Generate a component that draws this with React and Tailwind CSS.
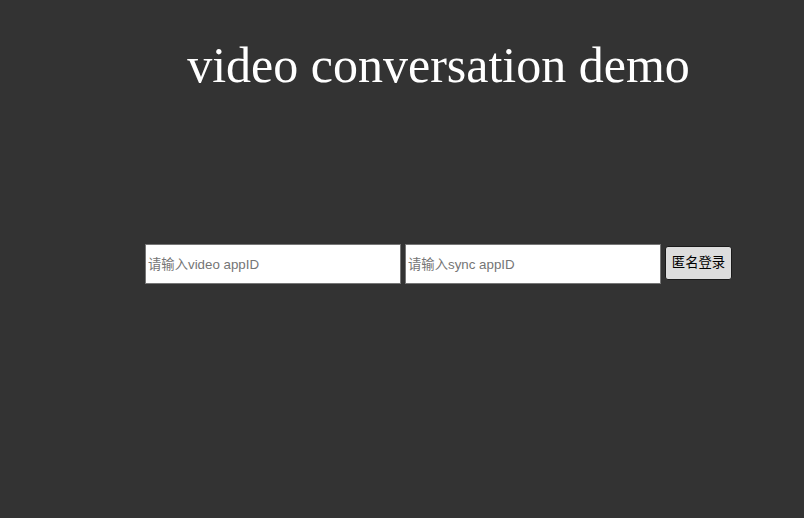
export default function App() {
  return (
    <div className="min-h-[518px] w-full bg-[#333333]">
      <div className="ml-[145px] w-[587px] flex flex-col items-center pt-[37px]">
        <h1
          className="text-[50px] leading-[57px] text-white whitespace-nowrap"
          style={{ fontFamily: '"Liberation Serif", "Times New Roman", serif' }}
        >
          video conversation demo
        </h1>
        <div
          className="mt-[150px] flex items-start gap-[4px] self-stretch"
          style={{ fontFamily: '"Liberation Sans", Arial, "Noto Sans CJK SC", sans-serif' }}
        >
          <input
            className="w-[256px] h-[40px] bg-white border border-[#767676] px-[2px] text-[13.33px] text-black placeholder:text-[#757575] outline-none"
            placeholder="请输入video appID"
          />
          <input
            className="w-[256px] h-[40px] bg-white border border-[#767676] px-[2px] text-[13.33px] text-black placeholder:text-[#757575] outline-none"
            placeholder="请输入sync appID"
          />
          <button className="mt-[2px] w-[67px] h-[34px] bg-[#dddddd] border border-[#1a1a1a] rounded-[3px] text-[13.33px] text-black px-[5px]">
            匿名登录
          </button>
        </div>
      </div>
    </div>
  );
}
